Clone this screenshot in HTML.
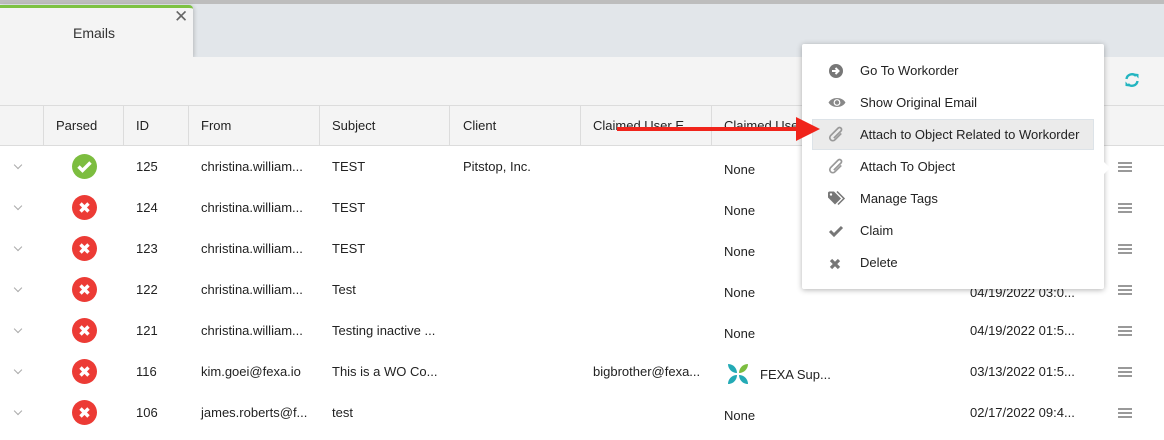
<!DOCTYPE html>
<html><head><style>
*{margin:0;padding:0;box-sizing:border-box}
body{width:1164px;height:440px;overflow:hidden;background:#fff;font-family:"Liberation Sans",sans-serif;font-size:13px;color:#222;position:relative}
.abs{position:absolute}
.hdr{top:105px;height:41px;background:#f4f4f4;border-top:1px solid #dcdcdc;border-bottom:1px solid #dcdcdc;left:0;width:1164px}
.vl{position:absolute;top:0;height:40px;width:1px;background:#dcdcdc}
.ht{position:absolute;top:12px;font-size:13px;color:#222}
.cell{position:absolute;font-size:13px;color:#222;white-space:nowrap}
.ham{position:absolute;left:1118px;width:14px;height:10px;border-top:2px solid #999;border-bottom:2px solid #999}
.ham:after{content:"";position:absolute;left:0;top:2px;width:14px;height:2px;background:#999}
.chev{position:absolute;left:15px;width:6px;height:6px;border-right:1px solid #aaa;border-bottom:1px solid #aaa;transform:rotate(45deg)}
.menu{left:802px;top:44px;width:302px;height:245px;background:#fff;box-shadow:0 1px 6px rgba(0,0,0,.3);border-radius:2px}
.mi{position:absolute;left:58px;font-size:13px;color:#222}
.ic{position:absolute;left:26px}
</style></head><body>
<div class="abs" style="left:0;top:0;width:1164px;height:4px;background:#bdbdbd"></div>
<div class="abs" style="left:0;top:4px;width:1164px;height:53px;background:#e2e6ea"></div>
<div class="abs" style="left:0;top:5px;width:193px;height:52px;background:#f4f4f4;border-top:3px solid #7dc242;border-radius:0 4px 0 0;box-shadow:1px 1px 4px rgba(0,0,0,.2)"></div>
<div class="abs" style="left:73px;top:25px;font-size:14px;color:#333">Emails</div>
<div class="abs" style="left:174px;top:7px;font-size:17px;color:#666">✕</div>
<div class="abs" style="left:0;top:57px;width:1164px;height:48px;background:#f4f4f4"></div>
<svg class="abs" style="left:1124px;top:72px" width="16" height="16" viewBox="0 0 16 16"><path d="M2.5 7A5.5 5.5 0 0 1 12 4" stroke="#23b5c0" stroke-width="2.4" fill="none"/><path d="M10 1.5L14.5 2V6.5Z" fill="#23b5c0"/><path d="M13.5 9A5.5 5.5 0 0 1 4 12" stroke="#23b5c0" stroke-width="2.4" fill="none"/><path d="M6 14.5L1.5 14V9.5Z" fill="#23b5c0"/></svg>
<div class="abs hdr">
<div class="vl" style="left:43px"></div><div class="vl" style="left:123px"></div><div class="vl" style="left:188px"></div><div class="vl" style="left:319px"></div><div class="vl" style="left:449px"></div><div class="vl" style="left:580px"></div><div class="vl" style="left:711px"></div>
<div class="ht" style="left:56px">Parsed</div><div class="ht" style="left:136px">ID</div><div class="ht" style="left:201px">From</div><div class="ht" style="left:332px">Subject</div><div class="ht" style="left:463px">Client</div><div class="ht" style="left:593px">Claimed User E</div><div class="ht" style="left:724px">Claimed Use</div>
</div>
<div class="chev" style="top:162px"></div><div class="chev" style="top:203px"></div><div class="chev" style="top:244px"></div><div class="chev" style="top:285px"></div><div class="chev" style="top:326px"></div><div class="chev" style="top:367px"></div><div class="chev" style="top:408px"></div>
<svg class="abs" style="left:72px;top:154px" width="25" height="25" viewBox="0 0 25 25"><circle cx="12.5" cy="12.5" r="12.5" fill="#7cbd3f"/><path d="M6.5 12.5l4 4 8-8" stroke="#fff" stroke-width="3.4" fill="none"/></svg>
<svg class="abs" style="left:72px;top:195px" width="25" height="25" viewBox="0 0 25 25"><circle cx="12.5" cy="12.5" r="12.5" fill="#ec3b35"/><path d="M8.5 8.5l8 8M16.5 8.5l-8 8" stroke="#fff" stroke-width="3.4"/></svg>
<svg class="abs" style="left:72px;top:236px" width="25" height="25" viewBox="0 0 25 25"><circle cx="12.5" cy="12.5" r="12.5" fill="#ec3b35"/><path d="M8.5 8.5l8 8M16.5 8.5l-8 8" stroke="#fff" stroke-width="3.4"/></svg>
<svg class="abs" style="left:72px;top:277px" width="25" height="25" viewBox="0 0 25 25"><circle cx="12.5" cy="12.5" r="12.5" fill="#ec3b35"/><path d="M8.5 8.5l8 8M16.5 8.5l-8 8" stroke="#fff" stroke-width="3.4"/></svg>
<svg class="abs" style="left:72px;top:318px" width="25" height="25" viewBox="0 0 25 25"><circle cx="12.5" cy="12.5" r="12.5" fill="#ec3b35"/><path d="M8.5 8.5l8 8M16.5 8.5l-8 8" stroke="#fff" stroke-width="3.4"/></svg>
<svg class="abs" style="left:72px;top:359px" width="25" height="25" viewBox="0 0 25 25"><circle cx="12.5" cy="12.5" r="12.5" fill="#ec3b35"/><path d="M8.5 8.5l8 8M16.5 8.5l-8 8" stroke="#fff" stroke-width="3.4"/></svg>
<svg class="abs" style="left:72px;top:400px" width="25" height="25" viewBox="0 0 25 25"><circle cx="12.5" cy="12.5" r="12.5" fill="#ec3b35"/><path d="M8.5 8.5l8 8M16.5 8.5l-8 8" stroke="#fff" stroke-width="3.4"/></svg>

<div class="cell" style="left:136px;top:159px">125</div><div class="cell" style="left:201px;top:159px">christina.william...</div><div class="cell" style="left:332px;top:159px">TEST</div><div class="cell" style="left:463px;top:159px">Pitstop, Inc.</div><div class="cell" style="left:724px;top:162px">None</div>
<div class="cell" style="left:136px;top:200px">124</div><div class="cell" style="left:201px;top:200px">christina.william...</div><div class="cell" style="left:332px;top:200px">TEST</div><div class="cell" style="left:724px;top:203px">None</div>
<div class="cell" style="left:136px;top:241px">123</div><div class="cell" style="left:201px;top:241px">christina.william...</div><div class="cell" style="left:332px;top:241px">TEST</div><div class="cell" style="left:724px;top:244px">None</div>
<div class="cell" style="left:136px;top:282px">122</div><div class="cell" style="left:201px;top:282px">christina.william...</div><div class="cell" style="left:332px;top:282px">Test</div><div class="cell" style="left:724px;top:285px">None</div><div class="cell" style="left:970px;top:285px">04/19/2022 03:0...</div>
<div class="cell" style="left:136px;top:323px">121</div><div class="cell" style="left:201px;top:323px">christina.william...</div><div class="cell" style="left:332px;top:323px">Testing inactive ...</div><div class="cell" style="left:724px;top:326px">None</div><div class="cell" style="left:970px;top:323px">04/19/2022 01:5...</div>
<div class="cell" style="left:136px;top:364px">116</div><div class="cell" style="left:201px;top:364px">kim.goei@fexa.io</div><div class="cell" style="left:332px;top:364px">This is a WO Co...</div><div class="cell" style="left:593px;top:364px">bigbrother@fexa...</div><div class="cell" style="left:760px;top:367px">FEXA Sup...</div><div class="cell" style="left:970px;top:364px">03/13/2022 01:5...</div>
<svg class="abs" style="left:727px;top:363px" width="22" height="22" viewBox="0 0 22 22"><path d="M1 1C7 1 10 6 10 10C5 10 1 6 1 1Z" fill="#23aab5"/><path d="M21 1C15 1 12 6 12 10C17 10 21 6 21 1Z" fill="#7cbd3f"/><path d="M1 21C7 21 10 16 10 12C5 12 1 16 1 21Z" fill="#23aab5"/><path d="M21 21C15 21 12 16 12 12C17 12 21 16 21 21Z" fill="#23aab5"/></svg>
<div class="cell" style="left:136px;top:405px">106</div><div class="cell" style="left:201px;top:405px">james.roberts@f...</div><div class="cell" style="left:332px;top:405px">test</div><div class="cell" style="left:724px;top:408px">None</div><div class="cell" style="left:970px;top:405px">02/17/2022 09:4...</div>
<div class="ham" style="top:162px"></div><div class="ham" style="top:203px"></div><div class="ham" style="top:244px"></div><div class="ham" style="top:285px"></div><div class="ham" style="top:326px"></div><div class="ham" style="top:367px"></div><div class="ham" style="top:408px"></div>

<div class="abs menu">
<div class="abs" style="left:10px;top:75px;width:282px;height:31px;background:#ebebeb;border:1px solid #dde3e8"></div>
<div class="abs" style="left:300px;top:116px;width:0;height:0;border-top:8px solid transparent;border-bottom:8px solid transparent;border-left:8px solid #fff"></div>
<svg class="ic" style="top:19px" width="16" height="16" viewBox="0 0 16 16"><circle cx="8" cy="8" r="7" fill="#777"/><path d="M4 8h6M7.5 5l3 3-3 3" stroke="#fff" stroke-width="2" fill="none"/></svg>
<div class="mi" style="top:19px">Go To Workorder</div>
<svg class="ic" style="top:52px" width="18" height="13" viewBox="0 0 18 13"><path d="M0.5 6.5C4 0.5 14 0.5 17.5 6.5C14 12.5 4 12.5 0.5 6.5Z" fill="#888"/><circle cx="9" cy="6.5" r="3.4" fill="#fff"/><circle cx="9" cy="6.5" r="2.2" fill="#888"/></svg>
<div class="mi" style="top:51px">Show Original Email</div>
<svg class="ic" style="top:82px" width="17" height="17" viewBox="0 0 16 16"><path d="M12.5 7L6.5 13a2.8 2.8 0 0 1-4-4L9.5 2a1.9 1.9 0 0 1 2.7 2.7L5.5 11.4" stroke="#999" stroke-width="1.6" fill="none"/></svg>
<div class="mi" style="top:83px">Attach to Object Related to Workorder</div>
<svg class="ic" style="top:114px" width="17" height="17" viewBox="0 0 16 16"><path d="M12.5 7L6.5 13a2.8 2.8 0 0 1-4-4L9.5 2a1.9 1.9 0 0 1 2.7 2.7L5.5 11.4" stroke="#999" stroke-width="1.6" fill="none"/></svg>
<div class="mi" style="top:115px">Attach To Object</div>
<svg class="ic" style="top:147px" width="18" height="15" viewBox="0 0 18 14"><path d="M0 1V6L7 13L13 7L6 0H1Z" fill="#777"/><path d="M9 0L16 7L10 13" stroke="#777" stroke-width="1.5" fill="none"/><circle cx="3" cy="3" r="1.2" fill="#fff"/></svg>
<div class="mi" style="top:147px">Manage Tags</div>
<svg class="ic" style="top:180px" width="16" height="14" viewBox="0 0 16 14"><path d="M2 7l4 4 8-8" stroke="#777" stroke-width="3" fill="none"/></svg>
<div class="mi" style="top:179px">Claim</div>
<svg class="ic" style="top:213px" width="14" height="14" viewBox="0 0 14 14"><path d="M3 3l8 8M11 3l-8 8" stroke="#777" stroke-width="3.2"/></svg>
<div class="mi" style="top:211px">Delete</div>
</div>
<svg class="abs" style="left:610px;top:112px" width="215" height="34" viewBox="0 0 215 34"><path d="M7 17H188" stroke="#f0241b" stroke-width="4"/><path d="M186 5L210 17L186 29Z" fill="#f0241b"/></svg>
</body></html>
